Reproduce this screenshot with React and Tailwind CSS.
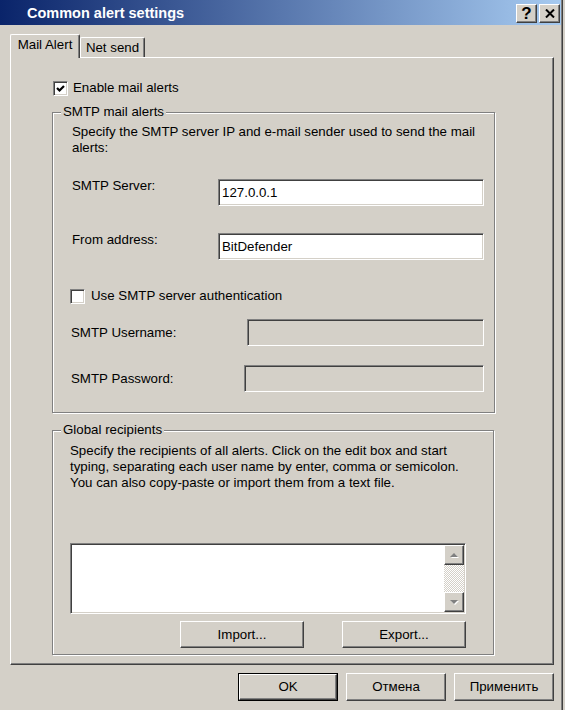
import React from "react";

const sunken =
  "border border-t-[#808080] border-l-[#808080] border-b-white border-r-white shadow-[inset_1px_1px_0_#404040,inset_-1px_-1px_0_#d4d0c8]";
const raised =
  "border border-t-white border-l-white border-r-[#404040] border-b-[#404040] shadow-[inset_-1px_-1px_0_#808080]";
const etched =
  "border border-[#808080] shadow-[inset_1px_1px_0_#ffffff,1px_1px_0_#ffffff]";

const Checkbox = ({ checked }) => (
  <div className={`w-[15px] h-[15px] bg-white flex items-center justify-center shrink-0 ${sunken}`}>
    {checked && (
      <svg width="9" height="9" viewBox="0 0 9 9">
        <path d="M1 4 L3.5 6.5 L8 2" fill="none" stroke="#000" strokeWidth="2.2" />
      </svg>
    )}
  </div>
);

const Input = ({ value, disabled, className = "" }) => (
  <div
    className={`h-[27px] flex items-center pl-[3px] ${disabled ? "bg-[#d4d0c8]" : "bg-white"} ${sunken} ${className}`}
  >
    {value}
  </div>
);

const Button = ({ children, className = "" }) => (
  <div className={`flex items-center justify-center bg-[#d4d0c8] ${raised} ${className}`}>{children}</div>
);

const Arrow = ({ up }) => (
  <svg width="10" height="7" viewBox="0 0 10 7">
    {up ? (
      <>
        <path d="M2 6 L6 2 L10 6 Z" fill="#ffffff" />
        <path d="M1 5 L5 1 L9 5 Z" fill="#808080" />
      </>
    ) : (
      <>
        <path d="M2 2 L6 6 L10 2 Z" fill="#ffffff" />
        <path d="M1 1 L5 5 L9 1 Z" fill="#808080" />
      </>
    )}
  </svg>
);

const TitleButton = ({ children }) => (
  <div className={`w-[21px] h-[19px] bg-[#d4d0c8] flex items-center justify-center ${raised}`}>{children}</div>
);

export default function App() {
  return (
    <div className="w-[565px] h-[710px] bg-[#d4d0c8] flex text-[13.3px] leading-[16px] text-black [font-family:'Liberation_Sans',Arial,sans-serif] overflow-hidden">
      <div className="w-[561px] flex flex-col">
        {/* title bar */}
        <div className="h-[25px] flex items-start bg-[linear-gradient(to_right,#0a246a,#a6caf0)]">
          <div className="h-[25px] flex items-center pl-[27px] text-white font-bold text-[14.5px]">
            Common alert settings
          </div>
          <div className="ml-auto flex gap-[2px] pt-[4px] pr-[1px]">
            <TitleButton>
              <span className="font-bold text-[17px] leading-[17px]">?</span>
            </TitleButton>
            <TitleButton>
              <svg width="10" height="9" viewBox="0 0 10 9">
                <path d="M1 0.5 L9 8.5 M9 0.5 L1 8.5" stroke="#000" strokeWidth="2" />
              </svg>
            </TitleButton>
          </div>
        </div>

        {/* tabs */}
        <div className="flex items-end pl-[10px] pt-[9px]">
          <div className="relative z-10 w-[70px] h-[24px] -mb-[1px] bg-[#d4d0c8] border-l border-t border-r border-l-white border-t-white border-r-[#404040] shadow-[inset_-1px_0_0_#808080] rounded-t-[2px] flex justify-center pt-[2px]">
            Mail Alert
          </div>
          <div className="w-[65px] h-[20px] bg-[#d4d0c8] border-l border-t border-r border-l-white border-t-white border-r-[#404040] shadow-[inset_-1px_0_0_#808080] rounded-t-[2px] flex justify-center pt-[2px]">
            Net send
          </div>
        </div>

        {/* tab panel */}
        <div className="ml-[10px] w-[544px] h-[608px] flex flex-col border border-t-white border-l-white border-r-[#404040] border-b-[#404040] shadow-[inset_-1px_-1px_0_#808080]">
          <div className="mt-[22px] ml-[42px] h-[16px] flex items-center gap-[5px]">
            <Checkbox checked />
            <span>Enable mail alerts</span>
          </div>

          <fieldset className={`mt-[8px] ml-[41px] w-[443px] h-[309px] ${etched}`}>
            <legend className="ml-[8px] px-[2px] bg-[#d4d0c8]">SMTP mail alerts</legend>
            <div className="mt-[4px] pl-[19px] whitespace-nowrap">
              Specify the SMTP server IP and e-mail sender used to send the mail
              <br />
              alerts:
            </div>
            <div className="mt-[22px] pl-[19px] flex items-start">
              <span className="w-[146px]">SMTP Server:</span>
              <Input value="127.0.0.1" className="mt-[1px] w-[266px]" />
            </div>
            <div className="mt-[26px] pl-[19px] flex items-start">
              <span className="w-[146px]">From address:</span>
              <Input value="BitDefender" className="mt-[1px] w-[266px]" />
            </div>
            <div className="mt-[28px] pl-[17px] h-[16px] flex items-center gap-[6px]">
              <Checkbox />
              <span>Use SMTP server authentication</span>
            </div>
            <div className="mt-[15px] pl-[18px] flex items-center">
              <span className="w-[176px]">SMTP Username:</span>
              <Input disabled className="w-[237px]" />
            </div>
            <div className="mt-[19px] pl-[18px] flex items-center">
              <span className="w-[173px]">SMTP Password:</span>
              <Input disabled className="w-[240px]" />
            </div>
          </fieldset>

          <fieldset className={`mt-[9px] ml-[41px] w-[442px] h-[233px] ${etched}`}>
            <legend className="ml-[8px] px-[2px] bg-[#d4d0c8]">Global recipients</legend>
            <div className="mt-[5px] pl-[17px] whitespace-nowrap">
              Specify the recipients of all alerts. Click on the edit box and start
              <br />
              typing, separating each user name by enter, comma or semicolon.
              <br />
              You can also copy-paste or import them from a text file.
            </div>
            <div className={`mt-[52px] ml-[17px] w-[396px] h-[71px] bg-white flex ${sunken}`}>
              <div className="flex-1" />
              <div className="w-[20px] my-[1px] mr-[1px] flex flex-col">
                <Button className="h-[20px]">
                  <Arrow up />
                </Button>
                <div className="flex-1 bg-[repeating-conic-gradient(#ffffff_0_25%,#d4d0c8_0_50%)] bg-[length:2px_2px]" />
                <Button className="h-[20px]">
                  <Arrow />
                </Button>
              </div>
            </div>
            <div className="mt-[7px] pl-[127px] flex gap-[38px]">
              <Button className="w-[124px] h-[27px]">Import...</Button>
              <Button className="w-[124px] h-[27px]">Export...</Button>
            </div>
          </fieldset>
        </div>

        {/* dialog buttons */}
        <div className="mt-[8px] pr-[7px] flex justify-end gap-[8px]">
          <div className="w-[100px] h-[28px] border border-black flex">
            <Button className="flex-1">OK</Button>
          </div>
          <Button className="w-[100px] h-[28px]">Отмена</Button>
          <Button className="w-[100px] h-[28px]">Применить</Button>
        </div>
      </div>
      <div className="w-[1px] bg-[#808080]" />
      <div className="w-[1px] bg-[#404040]" />
    </div>
  );
}
